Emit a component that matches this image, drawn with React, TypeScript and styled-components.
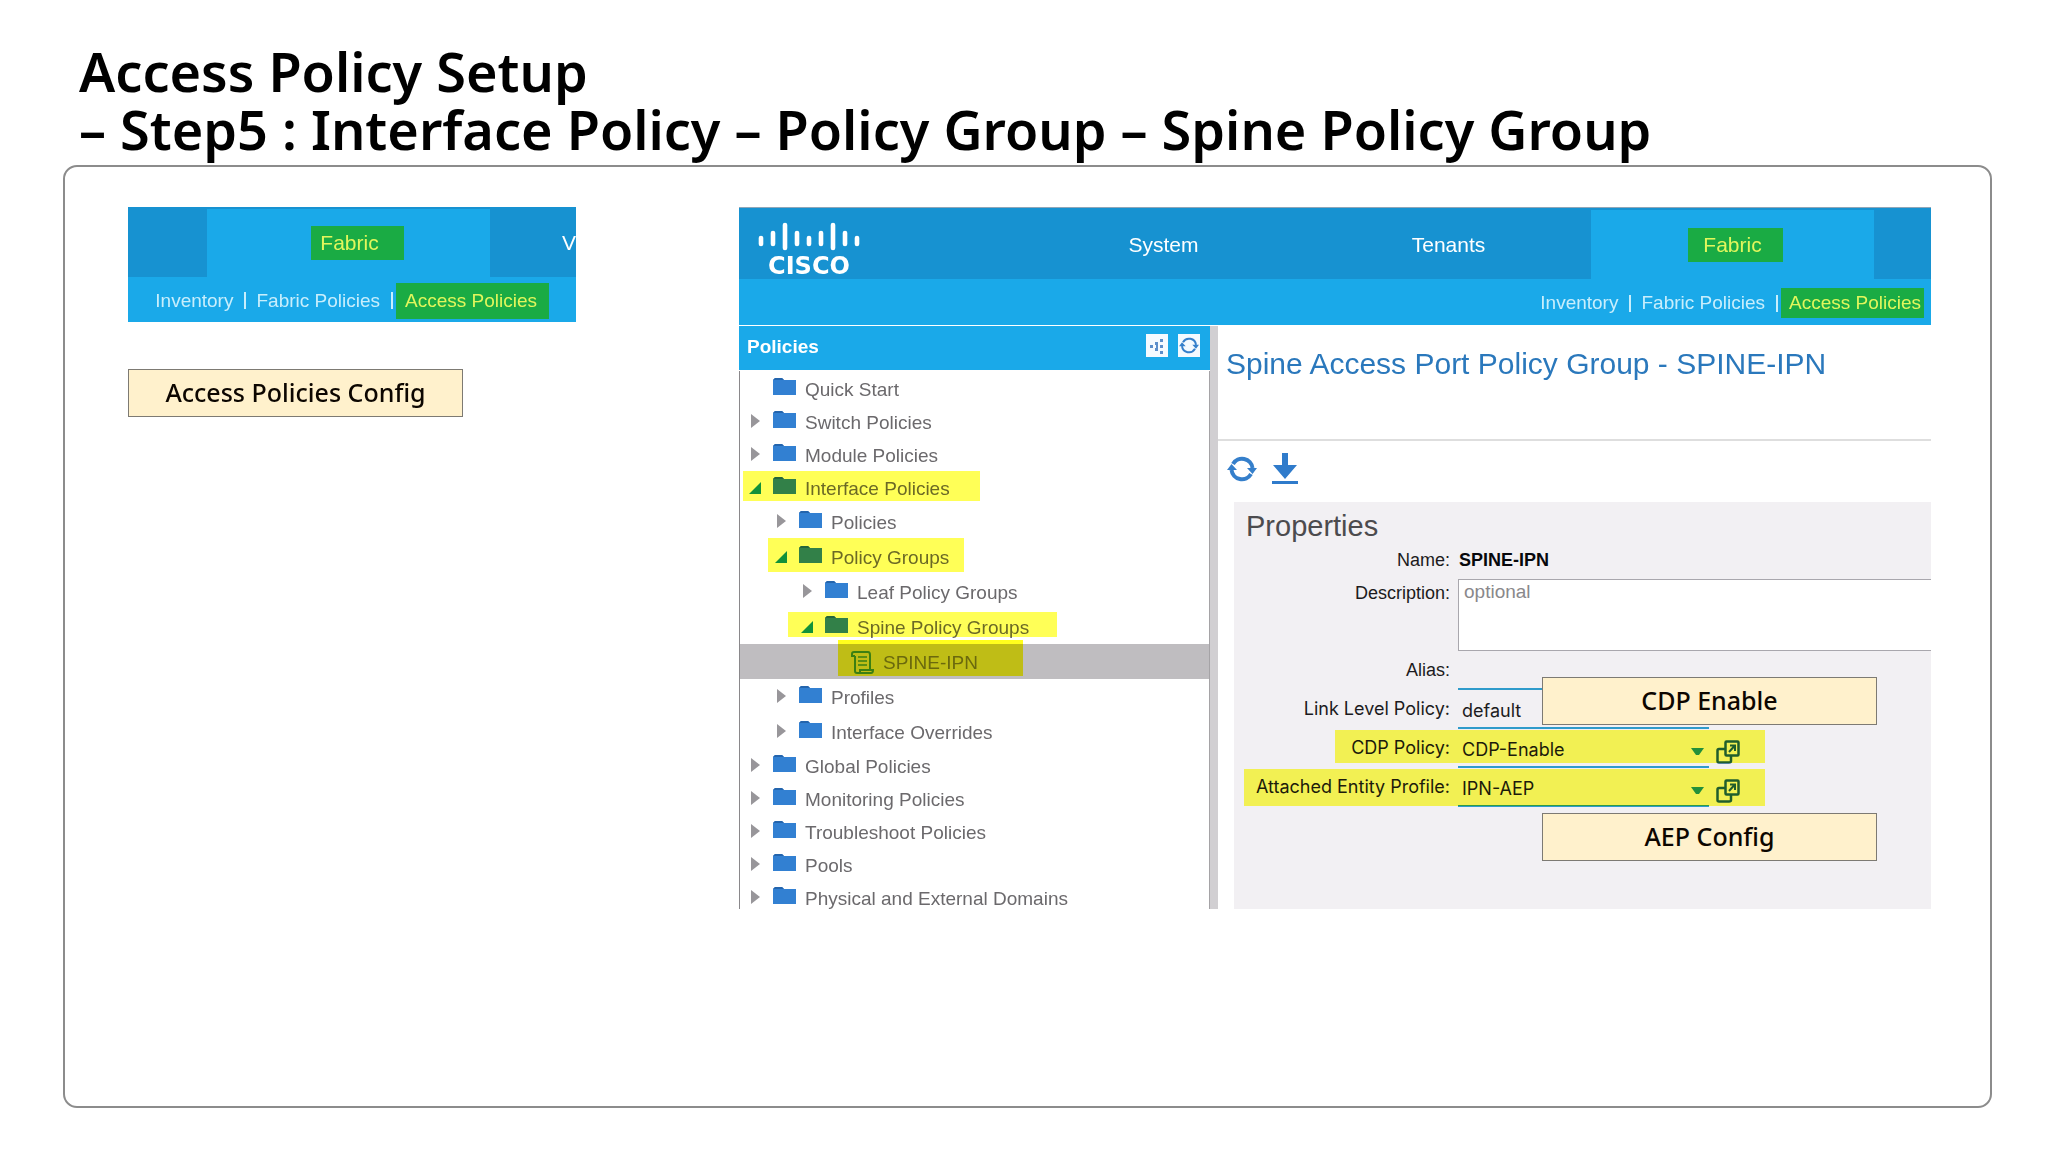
import React from "react";
import styled, { createGlobalStyle, css } from "styled-components";

const SANS = '"Liberation Sans", Arial, sans-serif';
const SLIDE = '"Noto Sans", "Noto Sans CJK KR", sans-serif';
const FORM = 'Inter, "Liberation Sans", sans-serif';

const color = {
  bar: "#1792d1",
  active: "#1aa9e9",
  green: "#1aab44",
  lime: "#e2f65c",
  folder: "#3280d2",
  title: "#2a78bc",
};

const GlobalStyle = createGlobalStyle`
  *, *::before, *::after { box-sizing: border-box; }
  body { margin: 0; background: #fff; font-family: ${SANS}; }
  button { font: inherit; border: 0; padding: 0; background: none; cursor: pointer; }
  svg { display: block; }
`;

const Slide = styled.main`
  min-height: 100vh;
  display: flex;
  flex-direction: column;
  padding: 42px 56px 44px 63px;
`;

const Heading = styled.h1`
  margin: 0;
  padding-left: 16px;
  font-family: ${SLIDE};
  font-size: 54px;
  line-height: 58px;
  font-weight: 600;
  color: #000;
  span { display: block; white-space: pre; }
`;

const Frame = styled.section`
  flex: 1;
  margin-top: 7px;
  border: 2px solid #8c8c8c;
  border-radius: 14px;
  padding: 40px 59px 40px 63px;
  display: grid;
  grid-template-columns: 448fr 1192fr;
  column-gap: 163px;
  align-items: start;
`;

const LeftColumn = styled.div`
  display: flex;
  flex-direction: column;
  align-items: flex-start;
  gap: 47px;
`;

const Callout = styled.div`
  width: 335px;
  height: 48px;
  padding-bottom: 3px;
  border: 1px solid #7d7a73;
  background: #fff1cc;
  display: flex;
  align-items: center;
  justify-content: center;
  font-family: ${SLIDE};
  font-size: 25px;
  line-height: 32px;
  font-weight: 500;
  color: #0c0600;
`;

const PinnedCallout = styled(Callout)<{ $top: number }>`
  position: absolute;
  left: 308px;
  top: ${(p) => p.$top}px;
`;

const NavBlock = styled.header`
  width: 100%;
  background: ${color.active};
  overflow: hidden;
`;

const Tabs = styled.nav<{ $cols: string; $height: number }>`
  display: grid;
  grid-template-columns: ${(p) => p.$cols};
  height: ${(p) => p.$height}px;
  border-top: 2px solid ${color.bar};
  background: ${color.bar};
`;

const Tab = styled.a<{ $active?: boolean; $end?: boolean }>`
  display: flex;
  align-items: center;
  justify-content: ${(p) => (p.$end ? "flex-end" : "center")};
  overflow: hidden;
  font-size: 21px;
  line-height: 24px;
  color: #fff;
  text-decoration: none;
  background: ${(p) => (p.$active ? color.active : "transparent")};
`;

const TabMark = styled.span<{ $wide?: boolean }>`
  display: block;
  background: ${color.green};
  color: ${color.lime};
  padding: ${(p) => (p.$wide ? "5px 25px 5px 9px" : "5px 21px 5px 15px")};
  margin-left: ${(p) => (p.$wide ? 18 : 6)}px;
`;

const SubNav = styled.nav<{ $wide?: boolean }>`
  display: flex;
  align-items: center;
  justify-content: flex-end;
  height: ${(p) => (p.$wide ? 45 : 46)}px;
  padding: 2px ${(p) => (p.$wide ? 27 : 7)}px 0 0;
  font-size: 19px;
  line-height: 22px;
`;

const SubLink = styled.a<{ $marked?: boolean; $wide?: boolean }>`
  white-space: nowrap;
  text-decoration: none;
  color: #c8eefc;
  ${(p) =>
    p.$marked &&
    css`
      color: ${color.lime};
      background: ${color.green};
      padding: ${p.$wide ? "7px 12px 7px 9px" : "4px 3px 4px 8px"};
    `}
`;

const Divider = styled.span<{ $tight?: boolean }>`
  width: 2px;
  height: 17px;
  margin: 0 ${(p) => (p.$tight ? 3 : 10)}px 0 11px;
  background: #c8eefc;
`;

const Logo = styled.div`
  display: flex;
  flex-direction: column;
  align-items: center;
  width: 102px;
  margin: 12px 0 0 19px;
  color: #fff;
  font-family: "DejaVu Sans", sans-serif;
  font-weight: 700;
  font-size: 24px;
  line-height: 28px;
`;

const AppWindow = styled.article`
  display: flex;
  flex-direction: column;
  border-top: 1px solid #8fa6b8;
`;

const Body = styled.div`
  margin-top: 1px;
  height: 583px;
  overflow: hidden;
  display: grid;
  grid-template-columns: 471fr 8px 713fr;
  grid-template-rows: 100%;
`;

const Sidebar = styled.aside`
  display: flex;
  flex-direction: column;
`;

const SideHeader = styled.div`
  height: 44px;
  flex-shrink: 0;
  display: flex;
  align-items: center;
  gap: 10px;
  padding: 0 10px 5px 8px;
  background: ${color.active};
`;

const SideTitle = styled.h2`
  flex: 1;
  margin: 0;
  padding-top: 2px;
  color: #fff;
  font-size: 19px;
  line-height: 22px;
  font-weight: 700;
`;

const SmallTool = styled.button`
  width: 22px;
  height: 23px;
  display: grid;
  place-items: center;
  background: #f4faff;
`;

const Tree = styled.ul`
  flex: 1;
  list-style: none;
  margin: 1px 0 0;
  padding: 1px 0 0;
  border-left: 1px solid #8a888b;
  border-right: 1px solid #a5a3a6;
`;

const Node = styled.li<{ $selected?: boolean }>`
  position: relative;
  background: ${(p) => (p.$selected ? "#bfbdc0" : "transparent")};
`;

const NodeButton = styled.button<{ $depth: number }>`
  width: 100%;
  height: ${(p) => (p.$depth > 0 ? 35 : 33)}px;
  padding-left: ${(p) => 9 + p.$depth * 26}px;
  display: flex;
  align-items: center;
  text-align: left;
  font-size: 19px;
  line-height: 22px;
  color: #6b696c;
  white-space: nowrap;
`;

const NodeText = styled.span`
  padding-top: 2px;
`;

const Twisty = styled.span`
  width: 24px;
  height: 18px;
`;

const Glyph = styled.span`
  width: 32px;
  height: 22px;
`;

const Marker = styled.span<{ $box: [number, number, number, number]; $tone?: string }>`
  position: absolute;
  left: ${(p) => p.$box[0]}px;
  top: ${(p) => p.$box[1]}px;
  width: ${(p) => p.$box[2]}px;
  height: ${(p) => p.$box[3]}px;
  background: ${(p) => p.$tone ?? "#ffff57"};
  mix-blend-mode: multiply;
  pointer-events: none;
`;

const Splitter = styled.div`
  background: #d1cfd2;
`;

const Content = styled.div`
  display: flex;
  flex-direction: column;
`;

const ContentTitle = styled.h2`
  margin: 0;
  height: 115px;
  padding: 20px 0 0 8px;
  border-bottom: 2px solid #dedede;
  font-size: 30px;
  line-height: 36px;
  font-weight: 400;
  white-space: nowrap;
  color: ${color.title};
`;

const Toolbar = styled.div`
  height: 61px;
  display: flex;
  gap: 14px;
  align-items: center;
  padding: 0 0 6px 9px;
`;

const Panel = styled.form`
  position: relative;
  flex: 1;
  margin-left: 16px;
  background: #f2f0f3;
`;

const PanelTitle = styled.h3`
  margin: 0;
  height: 44px;
  padding: 7px 0 0 12px;
  font-size: 29px;
  line-height: 34px;
  font-weight: 400;
  color: #4c4b4e;
`;

const Field = styled.div<{ $height: number; $font?: string }>`
  position: relative;
  display: grid;
  grid-template-columns: 216px 1fr;
  column-gap: 8px;
  height: ${(p) => p.$height}px;
  font-family: ${(p) => p.$font ?? SANS};
  font-size: 18px;
  line-height: 22px;
  color: #1c1b20;
`;

const Label = styled.label<{ $top: number }>`
  padding-top: ${(p) => p.$top}px;
  text-align: right;
  white-space: nowrap;
`;

const NameValue = styled.output`
  padding: 3px 0 0 1px;
  font-weight: 700;
  color: #08080c;
`;

const Description = styled.textarea`
  width: 100%;
  height: 72px;
  margin: 0;
  padding: 1px 5px;
  resize: none;
  outline: 0;
  border: 1px solid #a9a7ad;
  border-right: 0;
  border-radius: 0;
  background: #fff;
  font-family: ${SANS};
  font-size: 19px;
  line-height: 22px;
  &::placeholder { color: #8a888b; opacity: 1; }
`;

const underline = css`
  width: 251px;
  height: 39px;
  margin: 0;
  padding: 4px 4px 0;
  border: 0;
  border-bottom: 2px solid #2f9bcb;
  border-radius: 0;
  outline: 0;
  background: transparent;
  color: #1c1b20;
  font-family: ${FORM};
  font-size: 18px;
  line-height: 22px;
`;

const TextInput = styled.input`
  ${underline}
`;

const Choice = styled.div`
  position: relative;
  display: flex;
  align-items: center;
  gap: 7px;
`;

const Select = styled.select`
  ${underline}
  appearance: none;
`;

const Caret = styled.svg`
  position: absolute;
  left: 233px;
  top: 19px;
  pointer-events: none;
`;

const OpenButton = styled.button`
  padding-top: 6px;
`;

function CiscoBars() {
  const top = [14, 9, 1, 9, 14, 9, 1, 9, 14];
  const bottom = [24, 24, 28, 24, 24, 24, 28, 24, 24];
  return (
    <svg width="102" height="30" viewBox="0 0 102 30" aria-hidden="true">
      {top.map((y, i) => (
        <line key={i} x1={3 + i * 12} x2={3 + i * 12} y1={y + 2} y2={bottom[i] - 2}
          stroke="#fff" strokeWidth="4.6" strokeLinecap="round" />
      ))}
    </svg>
  );
}

function FolderIcon() {
  return (
    <svg width="24" height="18" viewBox="0 0 24 18" aria-hidden="true">
      <path d="M0 2 L2 0 H9 L11 2 H23 V17 H0 Z" fill={color.folder} />
      <path d="M0 2 L2 0 H9 L11 2" fill="#2465ad" />
    </svg>
  );
}

function ScrollIcon() {
  return (
    <svg width="24" height="24" viewBox="0 0 24 24" fill="none" stroke="#3c7f9c" strokeWidth="2" aria-hidden="true">
      <path d="M4 5 V20 Q4 22 6 22 H20 Q22 22 22 19 H9 V21 M19 19 V4 Q19 1 17 1 H3 Q1 1 1 3 V5 H4" />
      <path d="M7 6 H16 M7 10 H16 M7 14 H16" strokeWidth="1.6" />
    </svg>
  );
}

function ClosedArrow() {
  return (
    <svg width="12" height="16" viewBox="0 0 12 16" aria-hidden="true">
      <path d="M2 1 L11 8 L2 15 Z" fill="#98969a" />
    </svg>
  );
}

function OpenArrow() {
  return (
    <svg width="13" height="16" viewBox="0 0 13 16" aria-hidden="true">
      <path d="M12 3 V15 H0 Z" fill="#1291a8" />
    </svg>
  );
}

function ShareIcon() {
  return (
    <svg width="18" height="18" viewBox="0 0 18 18" fill="#5b8ecb" aria-hidden="true">
      <rect x="2" y="8" width="3" height="3" />
      <rect x="7" y="5" width="3" height="3" />
      <rect x="7" y="11" width="3" height="3" />
      <rect x="8" y="8" width="2" height="3" />
      <rect x="12" y="2" width="3" height="3" />
      <rect x="12" y="8" width="3" height="3" />
      <rect x="12" y="14" width="3" height="3" />
    </svg>
  );
}

function RefreshIcon({ width, height, stroke }: { width: number; height: number; stroke: number }) {
  return (
    <svg width={width} height={height} viewBox="0 0 30 28" aria-hidden="true">
      <g fill="none" stroke="#357fcb" strokeWidth={stroke}>
        <path d="M6 9 A10.500 10.500 0 0 1 25.500 13" />
        <path d="M24 19 A10.500 10.500 0 0 1 4.500 15" />
      </g>
      <path d="M20 13 H30 L25.500 19 Z M0 15 H10 L4.500 9 Z" fill="#357fcb" />
    </svg>
  );
}

function DownloadIcon() {
  return (
    <svg width="28" height="31" viewBox="0 0 28 31" fill="#2f7bcb" aria-hidden="true">
      <path d="M11 0 H17 V12 H26 L14 26 L2 12 H11 Z M1 28 H27 V31 H1 Z" />
    </svg>
  );
}

function OpenIcon() {
  return (
    <svg width="24" height="24" viewBox="0 0 24 24" fill="none" stroke="#205d80" strokeWidth="2.500" aria-hidden="true">
      <rect x="9.500" y="1.500" width="13" height="14" rx="1" />
      <path d="M9 9 H3 Q1.500 9 1.500 10.500 V21 Q1.500 22.500 3 22.500 H13 Q15 22.500 15 21 V16" />
      <path d="M13 12 L18 6.500 M14 5.500 H19 V11" strokeWidth="2" />
    </svg>
  );
}

type Item = {
  label: string;
  depth: number;
  state?: "open" | "closed";
  leaf?: boolean;
  box?: [number, number, number, number];
};

const items: Item[] = [
  { label: "Quick Start", depth: 0 },
  { label: "Switch Policies", depth: 0, state: "closed" },
  { label: "Module Policies", depth: 0, state: "closed" },
  { label: "Interface Policies", depth: 0, state: "open", box: [3, 0, 237, 30] },
  { label: "Policies", depth: 1, state: "closed" },
  { label: "Policy Groups", depth: 1, state: "open", box: [28, -1, 196, 34] },
  { label: "Leaf Policy Groups", depth: 2, state: "closed" },
  { label: "Spine Policy Groups", depth: 2, state: "open", box: [48, 3, 269, 25] },
  { label: "SPINE-IPN", depth: 3, leaf: true, box: [98, -4, 185, 36] },
  { label: "Profiles", depth: 1, state: "closed" },
  { label: "Interface Overrides", depth: 1, state: "closed" },
  { label: "Global Policies", depth: 0, state: "closed" },
  { label: "Monitoring Policies", depth: 0, state: "closed" },
  { label: "Troubleshoot Policies", depth: 0, state: "closed" },
  { label: "Pools", depth: 0, state: "closed" },
  { label: "Physical and External Domains", depth: 0, state: "closed" },
];

function TreeNode({ item }: { item: Item }) {
  return (
    <Node $selected={item.leaf}>
      <NodeButton type="button" $depth={item.depth}>
        <Twisty>
          {item.state === "closed" && <ClosedArrow />}
          {item.state === "open" && <OpenArrow />}
        </Twisty>
        <Glyph>{item.leaf ? <ScrollIcon /> : <FolderIcon />}</Glyph>
        <NodeText>{item.label}</NodeText>
      </NodeButton>
      {item.box && <Marker $box={item.box} $tone={item.leaf ? "#ffff1d" : undefined} />}
    </Node>
  );
}

function SubLinks({ wide }: { wide?: boolean }) {
  return (
    <SubNav $wide={wide}>
      <SubLink href="#inventory">Inventory</SubLink>
      <Divider />
      <SubLink href="#fabric-policies">Fabric Policies</SubLink>
      <Divider $tight />
      <SubLink href="#access-policies" $marked $wide={wide}>Access Policies</SubLink>
    </SubNav>
  );
}

function PolicySelect({ id, label, value, box }: {
  id: string; label: string; value: string; box?: [number, number, number, number];
}) {
  return (
    <Field $height={39} $font={FORM}>
      <Label htmlFor={id} $top={8}>{label}</Label>
      <Choice>
        <Select id={id} defaultValue={value}>
          <option>{value}</option>
        </Select>
        <Caret width="13" height="8" viewBox="0 0 13 8" aria-hidden="true">
          <path d="M0 0 H13 L8 7 H5 Z" fill="#2390a8" />
        </Caret>
        <OpenButton type="button" aria-label={`Open ${label}`}><OpenIcon /></OpenButton>
      </Choice>
      {box && <Marker $box={box} />}
    </Field>
  );
}

export default function App() {
  return (
    <>
      <GlobalStyle />
      <Slide>
        <Heading>
          <span>Access Policy Setup</span>
          <span>– Step5 : Interface Policy – Policy Group – Spine Policy Group</span>
        </Heading>
        <Frame>
          <LeftColumn>
            <NavBlock>
              <Tabs $cols="79fr 283fr 86fr" $height={70}>
                <span />
                <Tab href="#fabric" $active><TabMark $wide>Fabric</TabMark></Tab>
                <Tab href="#vm" $end>V</Tab>
              </Tabs>
              <SubLinks wide />
            </NavBlock>
            <Callout>Access Policies Config</Callout>
          </LeftColumn>

          <AppWindow>
            <NavBlock>
              <Tabs $cols="282fr 285fr 285fr 283fr 57fr" $height={71}>
                <Logo><CiscoBars />CISCO</Logo>
                <Tab href="#system">System</Tab>
                <Tab href="#tenants">Tenants</Tab>
                <Tab href="#fabric" $active><TabMark>Fabric</TabMark></Tab>
                <span />
              </Tabs>
              <SubLinks />
            </NavBlock>
            <Body>
              <Sidebar>
                <SideHeader>
                  <SideTitle>Policies</SideTitle>
                  <SmallTool type="button" aria-label="Show hierarchy"><ShareIcon /></SmallTool>
                  <SmallTool type="button" aria-label="Refresh tree">
                    <RefreshIcon width={20} height={19} stroke={3} />
                  </SmallTool>
                </SideHeader>
                <Tree>
                  {items.map((item) => <TreeNode key={item.label} item={item} />)}
                </Tree>
              </Sidebar>
              <Splitter />
              <Content>
                <ContentTitle>Spine Access Port Policy Group - SPINE-IPN</ContentTitle>
                <Toolbar>
                  <button type="button" aria-label="Refresh">
                    <RefreshIcon width={30} height={28} stroke={4} />
                  </button>
                  <button type="button" aria-label="Download"><DownloadIcon /></button>
                </Toolbar>
                <Panel>
                  <PanelTitle>Properties</PanelTitle>
                  <Field $height={33}>
                    <Label htmlFor="name" $top={3}>Name:</Label>
                    <NameValue id="name">SPINE-IPN</NameValue>
                  </Field>
                  <Field $height={72}>
                    <Label htmlFor="description" $top={3}>Description:</Label>
                    <Description id="description" placeholder="optional" />
                  </Field>
                  <Field $height={39}>
                    <Label htmlFor="alias" $top={8}>Alias:</Label>
                    <TextInput id="alias" />
                  </Field>
                  <PolicySelect id="link" label="Link Level Policy:" value="default" />
                  <PolicySelect id="cdp" label="CDP Policy:" value="CDP-Enable" box={[101, 1, 430, 33]} />
                  <PolicySelect id="aep" label="Attached Entity Profile:" value="IPN-AEP" box={[10, 1, 521, 37]} />
                  <PinnedCallout $top={175}>CDP Enable</PinnedCallout>
                  <PinnedCallout $top={311}>AEP Config</PinnedCallout>
                </Panel>
              </Content>
            </Body>
          </AppWindow>
        </Frame>
      </Slide>
    </>
  );
}
